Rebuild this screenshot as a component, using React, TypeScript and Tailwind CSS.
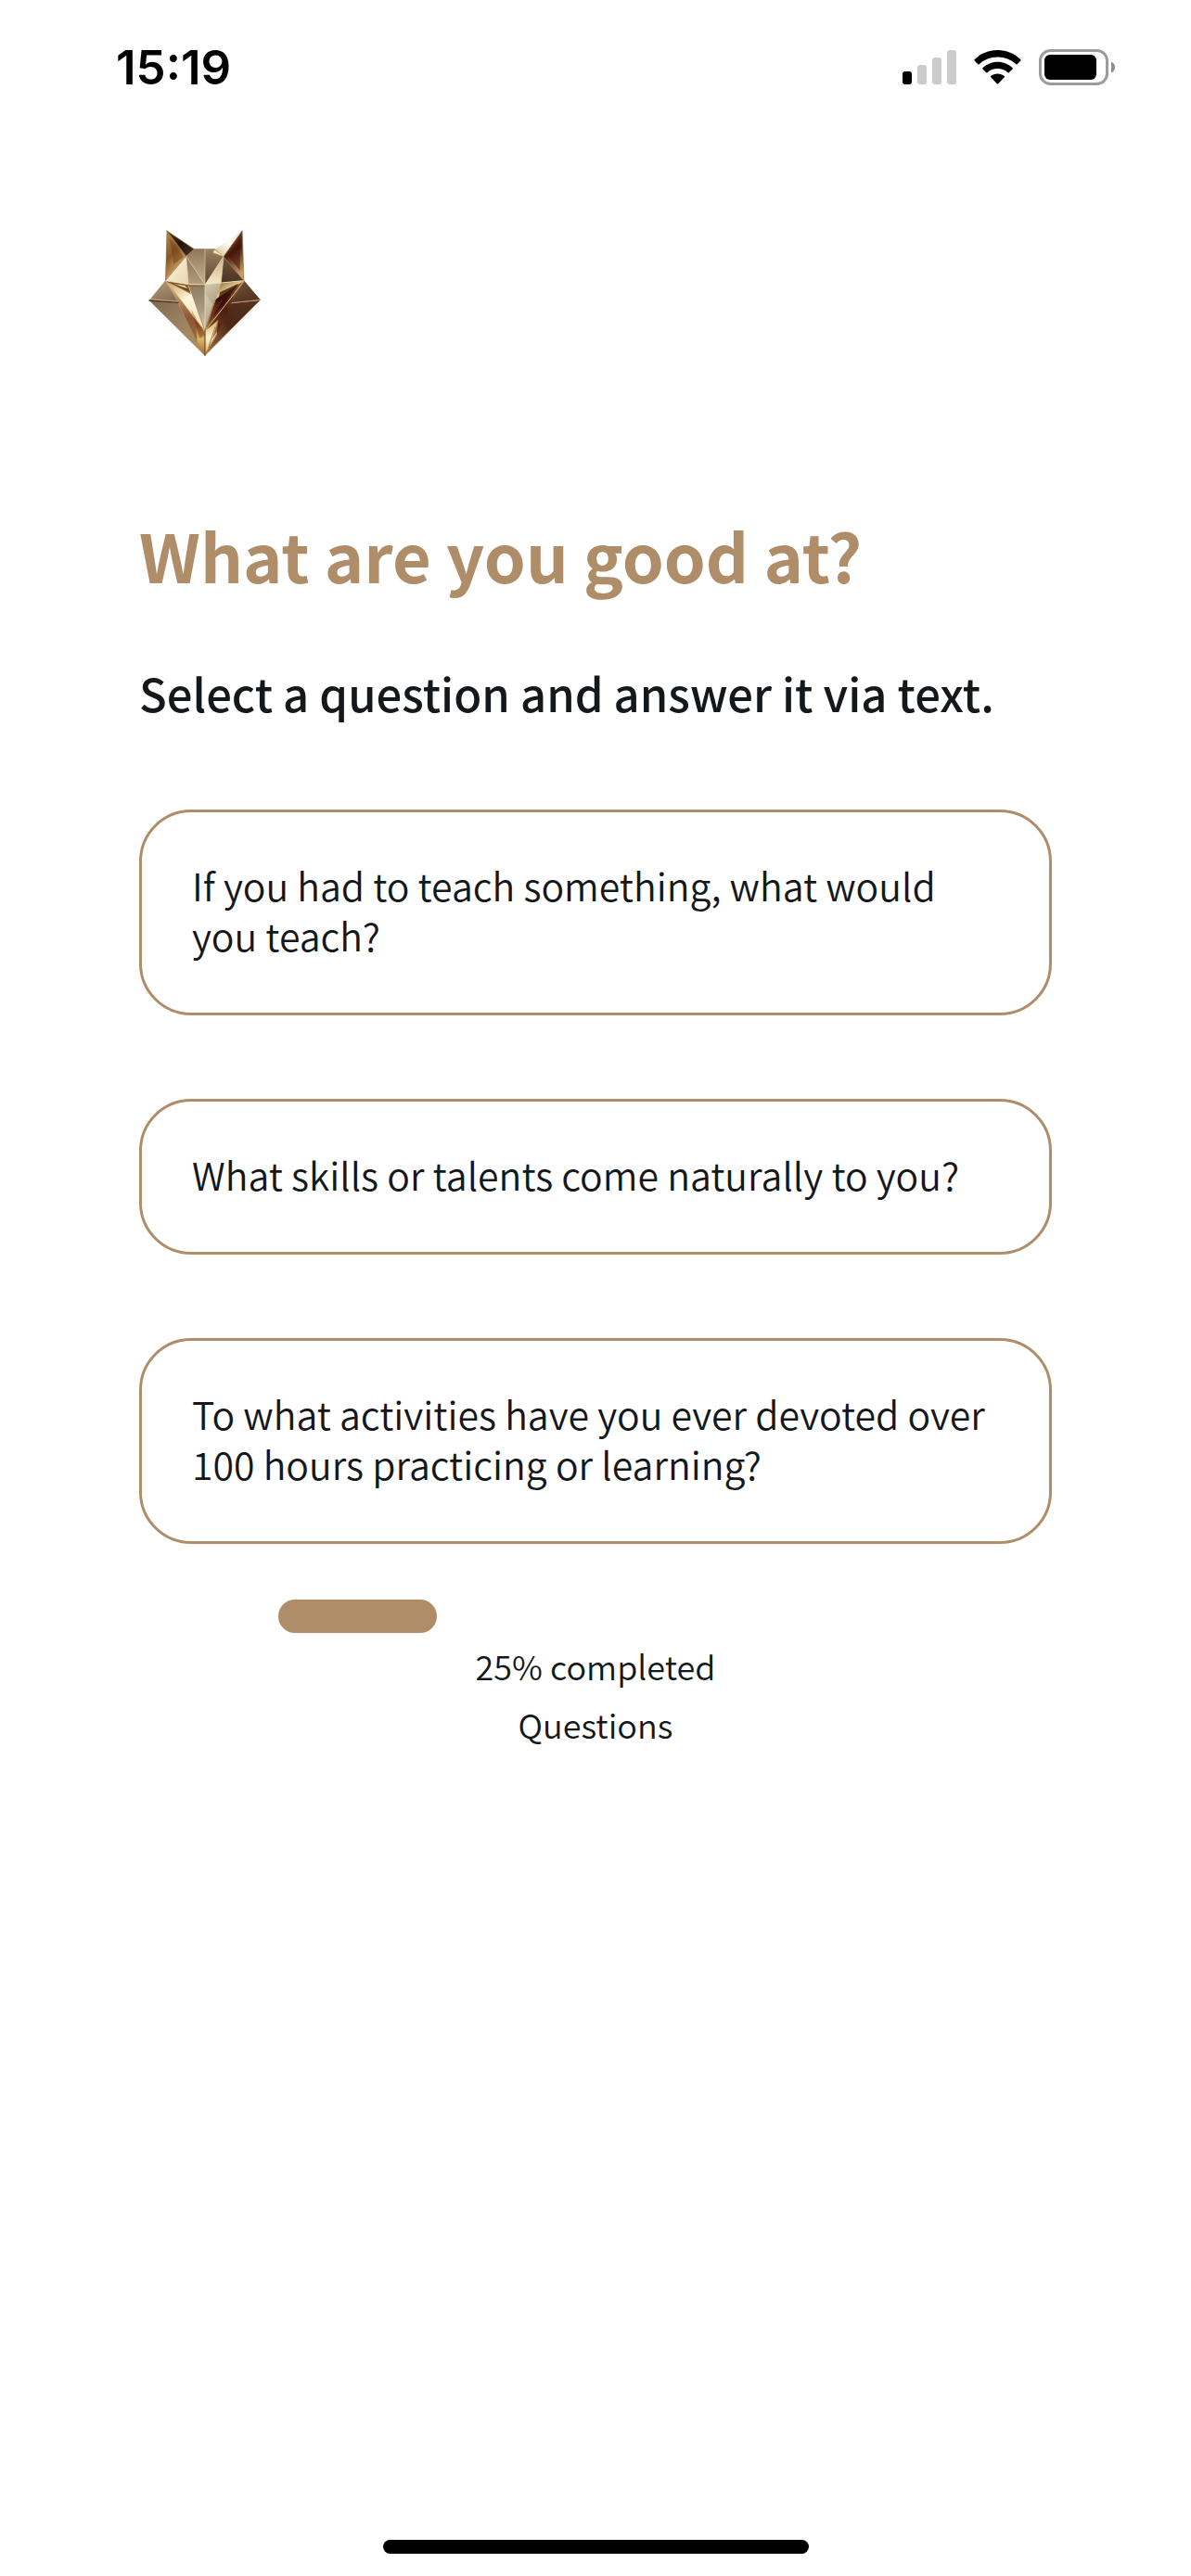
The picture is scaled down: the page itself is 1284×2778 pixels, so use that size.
const questions = [
  "If you had to teach something, what would you teach?",
  "What skills or talents come naturally to you?",
  "To what activities have you ever devoted over 100 hours practicing or learning?",
];

const progress = 25;

function SignalIcon() {
  return (
    <svg width="58" height="39" viewBox="0 0 58 39" aria-label="Signal">
      <rect x="0" y="24" width="10" height="14" rx="3" fill="#000" />
      <rect x="16" y="17" width="10" height="21" rx="3" fill="#cbcbcb" />
      <rect x="32" y="9" width="10" height="29" rx="3" fill="#cbcbcb" />
      <rect x="48" y="1" width="10" height="37" rx="3" fill="#cbcbcb" />
    </svg>
  );
}

function WifiIcon() {
  return (
    <svg width="51" height="39" viewBox="0 0 51 39" aria-label="Wi-Fi">
      <path d="M.6 11.2C7.2 4.700 16 1 25.500 1S43.800 4.700 50.400 11.200Q50.900 11.800 50.400 12.400L46.600 16.200Q46 16.700 45.400 16.200C40.100 11.300 33.200 8.400 25.500 8.400S10.900 11.300 5.600 16.200Q5 16.700 4.400 16.200L.6 12.400Q.1 11.800.6 11.200Z" />
      <path d="M9.400 20.200C13.700 16.100 19.300 13.700 25.500 13.700S37.300 16.100 41.600 20.200Q42.100 20.800 41.600 21.400L37.700 25.200Q37.100 25.700 36.500 25.200C33.500 22.600 29.700 21.100 25.500 21.100S17.500 22.600 14.500 25.200Q13.900 25.700 13.300 25.200L9.400 21.400Q8.900 20.800 9.400 20.200Z" />
      <path d="M18.200 29.100C20.200 27.400 22.700 26.500 25.500 26.500S30.800 27.400 32.800 29.100Q33.400 29.700 32.800 30.300L26.100 37.300Q25.500 37.900 24.900 37.300L18.200 30.300Q17.600 29.700 18.200 29.100Z" />
    </svg>
  );
}

function BatteryIcon() {
  return (
    <svg width="82" height="39" viewBox="0 0 82 39" aria-label="Battery">
      <rect x="1.500" y="1.500" width="72" height="36" rx="11" fill="none" stroke="#9c9c9c" strokeWidth="3" />
      <rect x="6" y="6" width="56" height="27" rx="6" fill="#000" />
      <path d="M78 13.500Q82 15.500 82 19.500T78 25.500Z" fill="#8c8c8c" />
    </svg>
  );
}

function Shade({ id, from, to, mid, x1 = 0, y1 = 0, x2 = 0, y2 = 1 }: {
  id: string; from: string; to: string; mid?: string; x1?: number; y1?: number; x2?: number; y2?: number;
}) {
  return (
    <linearGradient id={id} x1={x1} y1={y1} x2={x2} y2={y2}>
      <stop offset="0" stopColor={from} />
      {mid && <stop offset="0.5" stopColor={mid} />}
      <stop offset="1" stopColor={to} />
    </linearGradient>
  );
}

function FoxLogo() {
  return (
    <svg width="145" height="160" viewBox="0 0 435 480" role="img" aria-label="Golden fox">
      <defs>
        <Shade id="earL" from="#b98a4e" mid="#8a5726" to="#e0b878" x2={0.5} />
        <Shade id="earLD" from="#5a3a20" mid="#23120a" to="#4d3422" x2={1} />
        <Shade id="earR" from="#8c5f3e" mid="#4a1d0c" to="#c99a68" x2={0.3} />
        <Shade id="earRL" from="#efe3cc" mid="#fffdf2" to="#d9be8c" x1={1} x2={0} />
        <Shade id="topL" from="#8e7759" to="#c8b597" />
        <Shade id="topR" from="#9b8263" to="#5c432e" />
        <Shade id="browL" from="#fff8e2" to="#e8d5ab" x2={1} />
        <Shade id="browR" from="#6e5540" to="#4b3322" />
        <Shade id="midL" from="#8a7258" to="#b49d7c" />
        <Shade id="midR" from="#c9b084" to="#f7ebcb" />
        <Shade id="noseL" from="#8f7b60" mid="#a8977a" to="#ddd0b4" />
        <Shade id="noseR" from="#d6c9ac" mid="#b6a688" to="#8d7958" x2={0.3} />
        <Shade id="cheekL" from="#c3965a" mid="#fff6da" to="#f3e3bd" x2={0.6} />
        <Shade id="cheekR" from="#8b6238" mid="#3a1308" to="#a77540" x1={1} x2={0} />
        <Shade id="goldR" from="#7c5a2d" mid="#e8cc8f" to="#53290f" x2={1} />
        <Shade id="wingL" from="#b89f7c" to="#75604a" x2={0.5} />
        <Shade id="wingL2" from="#7e674e" mid="#9a8163" to="#b48e5e" x2={0.8} />
        <Shade id="wingR" from="#78583c" to="#4a2d1d" x2={0.5} />
        <Shade id="wingR2" from="#563622" mid="#4c2616" to="#a0764a" x1={1} x2={0} />
        <Shade id="foldL" from="#dcbd8c" mid="#8b5630" to="#a87a48" />
        <Shade id="foldR" from="#94704a" mid="#4e1c0e" to="#7a4c2a" x1={1} x2={0} />
        <Shade id="chinL" from="#7b4a1c" mid="#d9b76e" to="#9c6d30" />
        <Shade id="chinR" from="#d2aa62" mid="#fff3cc" to="#d0aa68" />
      </defs>
      <g strokeLinejoin="round">
        <path d="M84 203L33 266L126 274L160 300Z" fill="url(#wingL)" />
        <path d="M33 267L126 275L212 445Z" fill="url(#wingL2)" />
        <path d="M340 203L392 265L300 276L270 300Z" fill="url(#wingR)" />
        <path d="M392 266L300 276L255 315L213 445Z" fill="url(#wingR2)" />
        <path d="M86 204L126 275L205 436L213 445V366Z" fill="url(#foldL)" />
        <path d="M338 206L300 276L250 382L213 366Z" fill="url(#foldR)" />
        <path d="M182 337L213 366V445L188 402Z" fill="url(#chinL)" />
        <path d="M213 366L257 329L250 380L213 445Z" fill="url(#chinR)" />
        <path d="M90 42L85 202L152 124Z" fill="url(#earL)" />
        <path d="M90 42L178 101L152 124Z" fill="url(#earLD)" />
        <path d="M98 64L112 150L144 126Z" fill="#6f3c16" opacity="0.45" />
        <path d="M333 42L245 103L273 125Z" fill="url(#earRL)" />
        <path d="M333 42L273 125L339 205Z" fill="url(#earR)" />
        <path d="M328 62L288 124L326 170Z" fill="#3c0e05" opacity="0.5" />
        <path d="M178 100H213V215L152 124Z" fill="url(#topL)" />
        <path d="M213 100H245L273 125L213 215Z" fill="url(#topR)" />
        <path d="M245 103L273 125L238 112Z" fill="#f1dfb4" />
        <path d="M152 124L86 202L160 214Z" fill="url(#browL)" />
        <path d="M152 124L213 216L160 214Z" fill="url(#midL)" />
        <path d="M273 125L213 216L265 210Z" fill="url(#midR)" />
        <path d="M273 125L265 210L338 203Z" fill="url(#browR)" />
        <path d="M86 203L160 215L213 366Z" fill="url(#cheekL)" />
        <path d="M88 205L158 216L168 247Z" fill="#9c6c34" />
        <path d="M100 209L150 217L164 239Z" fill="#4a260f" opacity="0.65" />
        <path d="M110 212L148 218L156 229Z" fill="#f3dca8" />
        <path d="M265 211L338 204L213 366Z" fill="url(#cheekR)" />
        <path d="M265 211L338 204L246 264Z" fill="url(#goldR)" />
        <path d="M262 240L322 212L240 320Z" fill="#360d06" opacity="0.75" />
        <path d="M238 292L276 256L226 342Z" fill="#7b2a12" opacity="0.6" />
        <path d="M160 215H213V366Z" fill="url(#noseL)" />
        <path d="M213 216L265 211L246 268L213 366Z" fill="url(#noseR)" />
        <path d="M213 246L238 278L213 360Z" fill="#efe4ca" opacity="0.35" />
        <path d="M168 296L213 378L196 390Z" fill="#7d2f0f" opacity="0.45" />
        <path d="M258 322L262 352L236 394Z" fill="#5c1808" opacity="0.6" />
        <path d="M224 420L246 352M214 440L250 378" fill="none" stroke="#a5783b" strokeWidth="3" />
      </g>
      <g fill="none" strokeLinecap="round" strokeLinejoin="round">
        <path d="M33 267L126 274" stroke="#4b2f1d" strokeWidth="4" />
        <path d="M36 263L124 270" stroke="#dcc69c" strokeWidth="2" />
        <path d="M300 275L392 265" stroke="#c69a66" strokeWidth="3" />
        <path d="M86 203L160 215L213 216L265 210L338 203" stroke="#ead5a4" strokeWidth="3" />
        <path d="M87 207L160 219L213 220" stroke="#6e4b28" strokeWidth="2" />
        <path d="M152 124L213 216L273 125L265 210M152 124L160 215M213 100V216" stroke="#dac69f" strokeWidth="2" />
        <path d="M86 203L213 366L338 206" stroke="#d9ae6e" strokeWidth="3" />
        <path d="M213 216V366" stroke="#f1e7cf" strokeWidth="2" />
        <path d="M160 215L213 366L246 266" stroke="#8f7350" strokeWidth="2" />
        <path d="M90 42L178 101M90 42L86 202L152 124L90 42M333 42L273 125L338 204Z" stroke="#8d6740" strokeWidth="2" />
        <path d="M33 267L213 445L392 265" stroke="#a98053" strokeWidth="2" />
        <path d="M213 366V445" stroke="#613012" strokeWidth="3" />
      </g>
    </svg>
  );
}

function QuestionCard({ text }: { text: string }) {
  return (
    <button
      type="button"
      className="w-full rounded-[56px] border-[3px] border-[#af8d68] bg-white px-[54px] pt-[51px] pb-[57px] text-left text-[41px] leading-[54px] font-[350]"
    >
      {text}
    </button>
  );
}

export default function App() {
  return (
    <div className="flex min-h-screen flex-col bg-white font-['Noto_Sans_CJK_SC','Noto_Sans',sans-serif] text-[#14181b]">
      <header className="flex h-[145px] items-center justify-between pr-[82px] pl-[125px] text-black">
        <time className="font-['Inter',sans-serif] text-[51px] leading-[60px] font-semibold">15:19</time>
        <div className="flex items-center gap-[19px]">
          <SignalIcon />
          <WifiIcon />
          <BatteryIcon />
        </div>
      </header>

      <main className="flex grow flex-col px-[150px] pt-[90px]">
        <FoxLogo />
        <h1 className="mt-[158px] text-[72px] leading-[90px] font-bold text-[#af8d68]">What are you good at?</h1>
        <p className="mt-[71px] text-[49px] leading-[66px] font-medium">
          Select a question and answer it via text.
        </p>
        <div className="mt-[93px] flex flex-col gap-[90px]">
          {questions.map((question) => (
            <QuestionCard key={question} text={question} />
          ))}
        </div>
        <div
          role="progressbar"
          aria-label="Questions completed"
          aria-valuenow={progress}
          aria-valuemin={0}
          aria-valuemax={100}
          className="mx-[150px] mt-[60px] h-[36px]"
        >
          <div className="h-full rounded-full bg-[#af8d68]" style={{ width: `${progress}%` }} />
        </div>
        <div className="mt-[4px] text-center text-[36px] leading-[63px] font-[350]">
          <p>{progress}% completed</p>
          <p>Questions</p>
        </div>
      </main>

      <footer className="flex justify-center pb-[24px]">
        <div className="h-[15px] w-[459px] rounded-full bg-black" />
      </footer>
    </div>
  );
}
